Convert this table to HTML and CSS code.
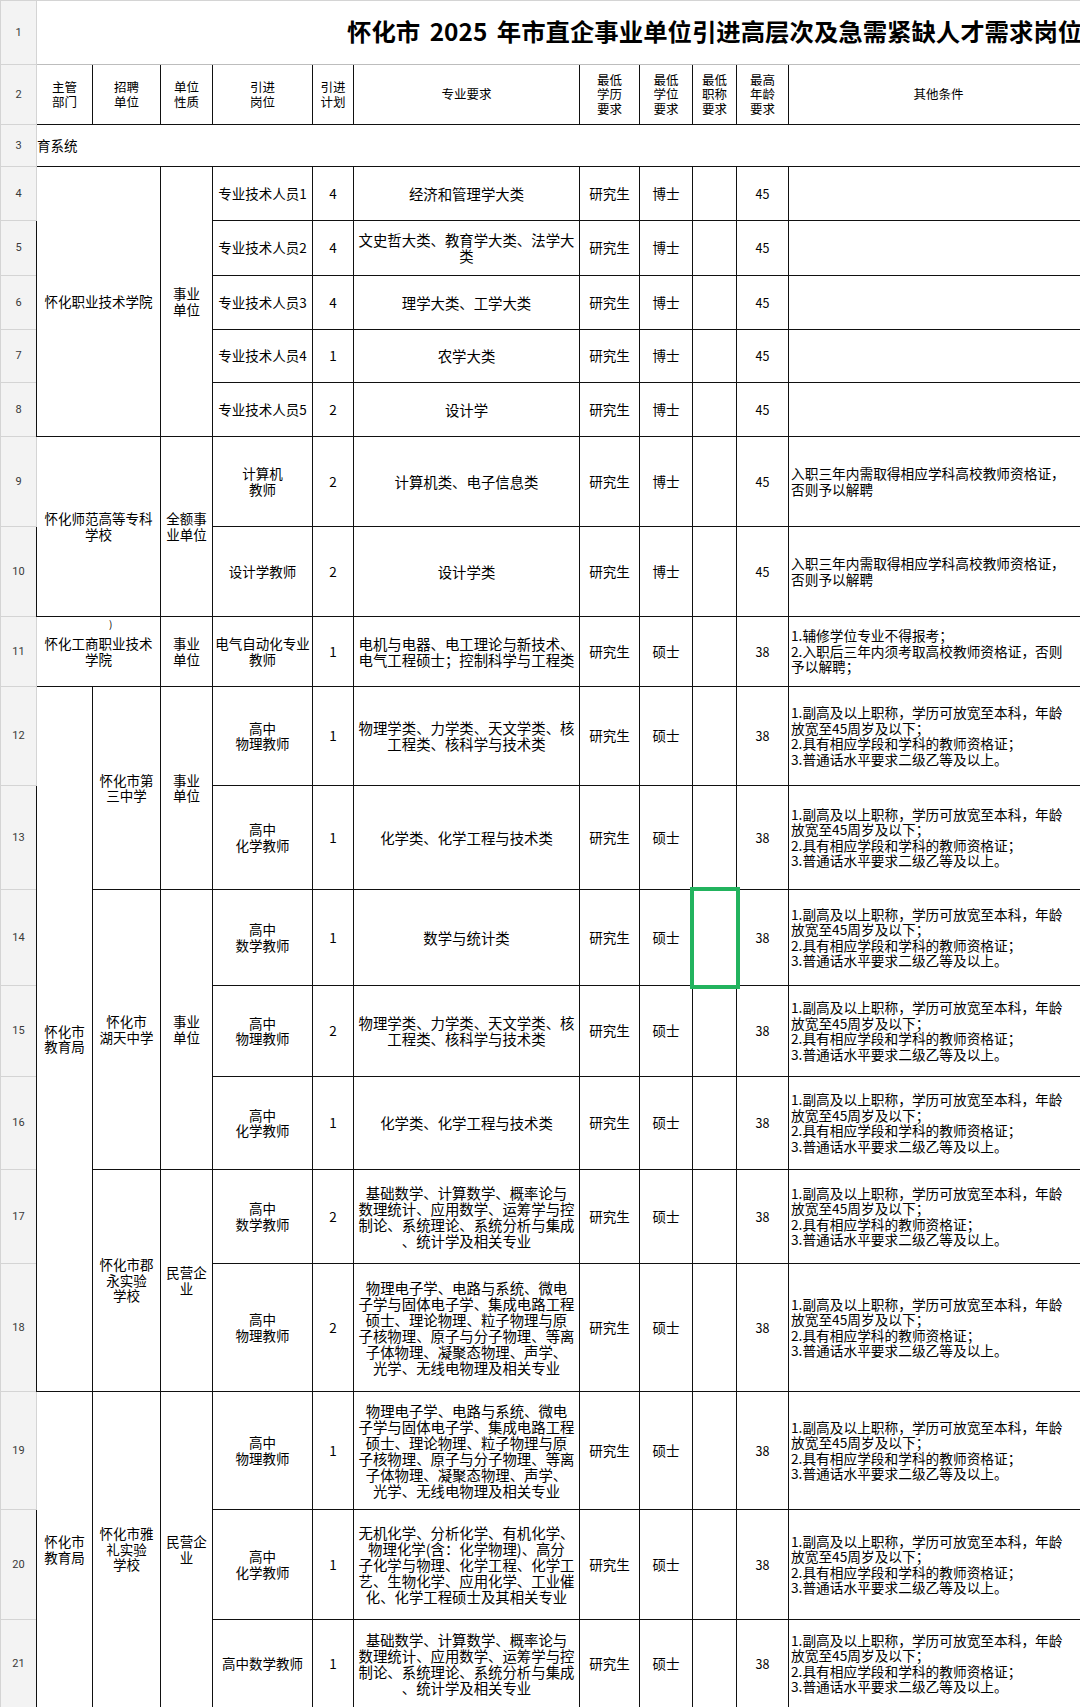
FILE: index.html
```html
<!DOCTYPE html>
<html lang="zh-CN">
<head>
<meta charset="utf-8">
<title>怀化市 2025 年市直企事业单位引进高层次及急需紧缺人才需求岗位表</title>
<link rel="stylesheet" href="styles.css">
</head>
<body>
<div class="frame">
<table class="sheet">
<colgroup>
<col class="c-rh"><col class="c-a"><col class="c-b"><col class="c-c"><col class="c-d"><col class="c-e"><col class="c-f"><col class="c-g"><col class="c-h"><col class="c-i"><col class="c-j"><col class="c-k">
</colgroup>
<tbody>
<tr class="row-1"><th class="rh">1</th><td class="title" colspan="11">怀化市 2025 年市直企事业单位引进高层次及急需紧缺人才需求岗位表</td></tr>
<tr class="row-2"><th class="rh">2</th>
<td class="hdr">主管<br>部门</td><td class="hdr">招聘<br>单位</td><td class="hdr">单位<br>性质</td><td class="hdr">引进<br>岗位</td><td class="hdr">引进<br>计划</td><td class="hdr">专业要求</td><td class="hdr">最低<br>学历<br>要求</td><td class="hdr">最低<br>学位<br>要求</td><td class="hdr">最低<br>职称<br>要求</td><td class="hdr">最高<br>年龄<br>要求</td><td class="hdr">其他条件</td></tr>
<tr class="row-3"><th class="rh">3</th><td class="section" colspan="11">育系统</td></tr>

<tr class="row-4"><th class="rh">4</th><td colspan="2" rowspan="5">怀化职业技术学院</td><td rowspan="5">事业<br>单位</td><td>专业技术人员1</td><td class="num">4</td><td class="major">经济和管理学大类</td><td>研究生</td><td>博士</td><td></td><td class="age">45</td><td class="other"></td></tr>
<tr class="row-5"><th class="rh">5</th><td>专业技术人员2</td><td class="num">4</td><td class="major">文史哲大类、教育学大类、法学大<br>类</td><td>研究生</td><td>博士</td><td></td><td class="age">45</td><td class="other"></td></tr>
<tr class="row-6"><th class="rh">6</th><td>专业技术人员3</td><td class="num">4</td><td class="major">理学大类、工学大类</td><td>研究生</td><td>博士</td><td></td><td class="age">45</td><td class="other"></td></tr>
<tr class="row-7"><th class="rh">7</th><td>专业技术人员4</td><td class="num">1</td><td class="major">农学大类</td><td>研究生</td><td>博士</td><td></td><td class="age">45</td><td class="other"></td></tr>
<tr class="row-8"><th class="rh">8</th><td>专业技术人员5</td><td class="num">2</td><td class="major">设计学</td><td>研究生</td><td>博士</td><td></td><td class="age">45</td><td class="other"></td></tr>

<tr class="row-9"><th class="rh">9</th><td colspan="2" rowspan="2">怀化师范高等专科<br>学校</td><td rowspan="2">全额事<br>业单位</td><td>计算机<br>教师</td><td class="num">2</td><td class="major">计算机类、电子信息类</td><td>研究生</td><td>博士</td><td></td><td class="age">45</td><td class="other">入职三年内需取得相应学科高校教师资格证，否则予以解聘</td></tr>
<tr class="row-10"><th class="rh">10</th><td>设计学教师</td><td class="num">2</td><td class="major">设计学类</td><td>研究生</td><td>博士</td><td></td><td class="age">45</td><td class="other">入职三年内需取得相应学科高校教师资格证，否则予以解聘</td></tr>

<tr class="row-11"><th class="rh">11</th><td colspan="2" class="anchor"><span class="stray">)</span>怀化工商职业技术<br>学院</td><td>事业<br>单位</td><td>电气自动化专业<br>教师</td><td class="num">1</td><td class="major">电机与电器、电工理论与新技术、<br>电气工程硕士；控制科学与工程类</td><td>研究生</td><td>硕士</td><td></td><td class="age">38</td><td class="other">1.辅修学位专业不得报考；<br>2.入职后三年内须考取高校教师资格证，否则予以解聘；</td></tr>

<tr class="row-12"><th class="rh">12</th><td rowspan="7">怀化市<br>教育局</td><td rowspan="2">怀化市第<br>三中学</td><td rowspan="2">事业<br>单位</td><td>高中<br>物理教师</td><td class="num">1</td><td class="major">物理学类、力学类、天文学类、核<br>工程类、核科学与技术类</td><td>研究生</td><td>硕士</td><td></td><td class="age">38</td><td class="other">1.副高及以上职称，学历可放宽至本科，年龄放宽至45周岁及以下；<br>2.具有相应学段和学科的教师资格证；<br>3.普通话水平要求二级乙等及以上。</td></tr>
<tr class="row-13"><th class="rh">13</th><td>高中<br>化学教师</td><td class="num">1</td><td class="major">化学类、化学工程与技术类</td><td>研究生</td><td>硕士</td><td></td><td class="age">38</td><td class="other">1.副高及以上职称，学历可放宽至本科，年龄放宽至45周岁及以下；<br>2.具有相应学段和学科的教师资格证；<br>3.普通话水平要求二级乙等及以上。</td></tr>
<tr class="row-14"><th class="rh">14</th><td rowspan="3">怀化市<br>湖天中学</td><td rowspan="3">事业<br>单位</td><td>高中<br>数学教师</td><td class="num">1</td><td class="major">数学与统计类</td><td>研究生</td><td>硕士</td><td class="sel"></td><td class="age">38</td><td class="other">1.副高及以上职称，学历可放宽至本科，年龄放宽至45周岁及以下；<br>2.具有相应学段和学科的教师资格证；<br>3.普通话水平要求二级乙等及以上。</td></tr>
<tr class="row-15"><th class="rh">15</th><td>高中<br>物理教师</td><td class="num">2</td><td class="major">物理学类、力学类、天文学类、核<br>工程类、核科学与技术类</td><td>研究生</td><td>硕士</td><td></td><td class="age">38</td><td class="other">1.副高及以上职称，学历可放宽至本科，年龄放宽至45周岁及以下；<br>2.具有相应学段和学科的教师资格证；<br>3.普通话水平要求二级乙等及以上。</td></tr>
<tr class="row-16"><th class="rh">16</th><td>高中<br>化学教师</td><td class="num">1</td><td class="major">化学类、化学工程与技术类</td><td>研究生</td><td>硕士</td><td></td><td class="age">38</td><td class="other">1.副高及以上职称，学历可放宽至本科，年龄放宽至45周岁及以下；<br>2.具有相应学段和学科的教师资格证；<br>3.普通话水平要求二级乙等及以上。</td></tr>
<tr class="row-17"><th class="rh">17</th><td rowspan="2">怀化市郡<br>永实验<br>学校</td><td rowspan="2">民营企<br>业</td><td>高中<br>数学教师</td><td class="num">2</td><td class="major">基础数学、计算数学、概率论与<br>数理统计、应用数学、运筹学与控<br>制论、系统理论、系统分析与集成<br>、统计学及相关专业</td><td>研究生</td><td>硕士</td><td></td><td class="age">38</td><td class="other">1.副高及以上职称，学历可放宽至本科，年龄放宽至45周岁及以下；<br>2.具有相应学科的教师资格证；<br>3.普通话水平要求二级乙等及以上。</td></tr>
<tr class="row-18"><th class="rh">18</th><td>高中<br>物理教师</td><td class="num">2</td><td class="major">物理电子学、电路与系统、微电<br>子学与固体电子学、集成电路工程<br>硕士、理论物理、粒子物理与原<br>子核物理、原子与分子物理、等离<br>子体物理、凝聚态物理、声学、<br>光学、无线电物理及相关专业</td><td>研究生</td><td>硕士</td><td></td><td class="age">38</td><td class="other">1.副高及以上职称，学历可放宽至本科，年龄放宽至45周岁及以下；<br>2.具有相应学科的教师资格证；<br>3.普通话水平要求二级乙等及以上。</td></tr>

<tr class="row-19"><th class="rh">19</th><td rowspan="3">怀化市<br>教育局</td><td rowspan="3">怀化市雅<br>礼实验<br>学校</td><td rowspan="3">民营企<br>业</td><td>高中<br>物理教师</td><td class="num">1</td><td class="major">物理电子学、电路与系统、微电<br>子学与固体电子学、集成电路工程<br>硕士、理论物理、粒子物理与原<br>子核物理、原子与分子物理、等离<br>子体物理、凝聚态物理、声学、<br>光学、无线电物理及相关专业</td><td>研究生</td><td>硕士</td><td></td><td class="age">38</td><td class="other">1.副高及以上职称，学历可放宽至本科，年龄放宽至45周岁及以下；<br>2.具有相应学段和学科的教师资格证；<br>3.普通话水平要求二级乙等及以上。</td></tr>
<tr class="row-20"><th class="rh">20</th><td>高中<br>化学教师</td><td class="num">1</td><td class="major">无机化学、分析化学、有机化学、<br>物理化学(含：化学物理)、高分<br>子化学与物理、化学工程、化学工<br>艺、生物化学、应用化学、工业催<br>化、化学工程硕士及其相关专业</td><td>研究生</td><td>硕士</td><td></td><td class="age">38</td><td class="other">1.副高及以上职称，学历可放宽至本科，年龄放宽至45周岁及以下；<br>2.具有相应学段和学科的教师资格证；<br>3.普通话水平要求二级乙等及以上。</td></tr>
<tr class="row-21"><th class="rh">21</th><td>高中数学教师</td><td class="num">1</td><td class="major">基础数学、计算数学、概率论与<br>数理统计、应用数学、运筹学与控<br>制论、系统理论、系统分析与集成<br>、统计学及相关专业</td><td>研究生</td><td>硕士</td><td></td><td class="age">38</td><td class="other">1.副高及以上职称，学历可放宽至本科，年龄放宽至45周岁及以下；<br>2.具有相应学段和学科的教师资格证；<br>3.普通话水平要求二级乙等及以上。</td></tr>
</tbody>
</table>
</div>
</body>
</html>
```

FILE: styles.css
```css
html, body {
  margin: 0;
  padding: 0;
  background: #ffffff;
}

body {
  width: 1080px;
  height: 1707px;
  overflow: hidden;
  font-family: "Noto Sans CJK SC", "Noto Sans", sans-serif;
  color: #000000;
}

.frame {
  width: 1080px;
  height: 1707px;
  overflow: hidden;
}

.sheet {
  border-collapse: collapse;
  table-layout: fixed;
  width: 1088px;
}

.c-rh { width: 36px; }
.c-a { width: 56px; }
.c-b { width: 68px; }
.c-c { width: 52px; }
.c-d { width: 100px; }
.c-e { width: 41px; }
.c-f { width: 226px; }
.c-g { width: 60px; }
.c-h { width: 53px; }
.c-i { width: 44px; }
.c-j { width: 52px; }
.c-k { width: 300px; }

.sheet td,
.sheet th {
  padding: 0 2px;
  border: 1px solid #111111;
  text-align: center;
  vertical-align: middle;
  font-size: 13.5px;
  line-height: 15.5px;
  font-weight: 400;
  color: #000000;
  overflow: hidden;
}

.sheet .rh {
  background: #f3f3f3;
  border: 1px solid #d4d4d4;
  color: #3a3a3a;
  font-family: Roboto, "Noto Sans", sans-serif;
  font-size: 11px;
  padding: 0;
}

.row-1 { height: 64px; }
.row-2 { height: 60px; }
.row-3 { height: 42px; }
.row-4 { height: 54px; }
.row-5 { height: 55px; }
.row-6 { height: 54px; }
.row-7 { height: 53px; }
.row-8 { height: 54px; }
.row-9 { height: 90px; }
.row-10 { height: 90px; }
.row-11 { height: 70px; }
.row-12 { height: 99px; }
.row-13 { height: 104px; }
.row-14 { height: 96px; }
.row-15 { height: 91px; }
.row-16 { height: 93px; }
.row-17 { height: 94px; }
.row-18 { height: 128px; }
.row-19 { height: 118px; }
.row-20 { height: 110px; }
.row-21 { height: 88px; }

.sheet .title {
  border: none;
  border-top: 1px solid #d4d4d4;
  border-bottom: 1px solid #bdbdbd;
  text-align: left;
  padding: 0 0 4px 310px;
  white-space: nowrap;
  font-size: 24.4px;
  line-height: 30px;
  font-weight: 700;
  word-spacing: 4px;
  color: #000000;
}

.sheet .hdr {
  font-size: 12.5px;
  line-height: 14.5px;
}

.sheet .section {
  border-left: none;
  border-right: none;
  text-align: left;
  padding: 0;
}

.sheet .num {
  font-size: 13.5px;
}

.sheet .age {
  font-size: 12.5px;
}

.sheet .major {
  font-size: 14.4px;
  line-height: 16px;
  white-space: nowrap;
  padding: 0 1px;
}

.sheet .other {
  text-align: left;
  font-size: 13.7px;
  line-height: 15.5px;
  padding: 0 19px 0 2px;
  border-right: none;
}

.sheet .anchor {
  position: relative;
}

.stray {
  position: absolute;
  top: 1px;
  left: 72px;
  font-size: 10px;
  line-height: 12px;
}

.sheet .sel {
  outline: 4px solid #22b35e;
  outline-offset: -1px;
}
```
